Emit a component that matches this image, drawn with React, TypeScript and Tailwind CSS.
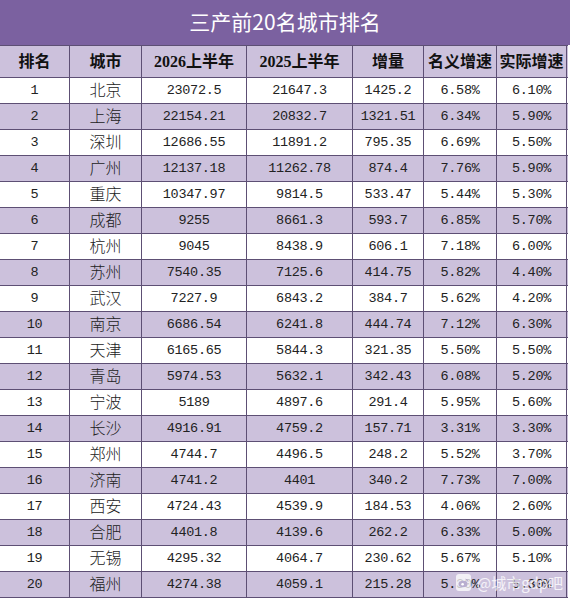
const rows = [
  ["1", "北京", "23072.5", "21647.3", "1425.2", "6.58%", "6.10%"],
  ["2", "上海", "22154.21", "20832.7", "1321.51", "6.34%", "5.90%"],
  ["3", "深圳", "12686.55", "11891.2", "795.35", "6.69%", "5.50%"],
  ["4", "广州", "12137.18", "11262.78", "874.4", "7.76%", "5.90%"],
  ["5", "重庆", "10347.97", "9814.5", "533.47", "5.44%", "5.30%"],
  ["6", "成都", "9255", "8661.3", "593.7", "6.85%", "5.70%"],
  ["7", "杭州", "9045", "8438.9", "606.1", "7.18%", "6.00%"],
  ["8", "苏州", "7540.35", "7125.6", "414.75", "5.82%", "4.40%"],
  ["9", "武汉", "7227.9", "6843.2", "384.7", "5.62%", "4.20%"],
  ["10", "南京", "6686.54", "6241.8", "444.74", "7.12%", "6.30%"],
  ["11", "天津", "6165.65", "5844.3", "321.35", "5.50%", "5.50%"],
  ["12", "青岛", "5974.53", "5632.1", "342.43", "6.08%", "5.20%"],
  ["13", "宁波", "5189", "4897.6", "291.4", "5.95%", "5.60%"],
  ["14", "长沙", "4916.91", "4759.2", "157.71", "3.31%", "3.30%"],
  ["15", "郑州", "4744.7", "4496.5", "248.2", "5.52%", "3.70%"],
  ["16", "济南", "4741.2", "4401", "340.2", "7.73%", "7.00%"],
  ["17", "西安", "4724.43", "4539.9", "184.53", "4.06%", "2.60%"],
  ["18", "合肥", "4401.8", "4139.6", "262.2", "6.33%", "5.00%"],
  ["19", "无锡", "4295.32", "4064.7", "230.62", "5.67%", "5.10%"],
  ["20", "福州", "4274.38", "4059.1", "215.28", "5.30%", "5.30%"],
];

const heads = ["排名", "城市", "2026上半年", "2025上半年", "增量", "名义增速", "实际增速"];
const widths = ["w-[70px]", "w-[72px]", "w-[105px]", "w-[106px]", "w-[71px]", "w-[73px]", "w-[70px]"];

const mono = { fontFamily: '"Liberation Mono", "Noto Sans CJK SC", monospace' };

export default function App() {
  return (
    <div className="relative h-[599px] w-[570px] overflow-hidden bg-white">
      <div className="flex h-[45px] items-center justify-center bg-[#7b61a0] pb-[2px] text-[21px] leading-none text-white [font-family:'Noto_Sans_CJK_SC',sans-serif]">
        三产前20名城市排名
      </div>
      <div className="w-[568px] border-t border-[#5d4f74]">
        <div className="flex h-[32px] border-b border-[#5d4f74] bg-[#ccc1dc]">
          {heads.map((h, i) => (
            <div
              key={h}
              className={`${widths[i]} flex items-center justify-center border-r border-[#5d4f74] text-[16px] leading-none font-bold text-[#111] [font-family:'Liberation_Serif','Noto_Sans_CJK_SC',serif]`}
            >
              {h}
            </div>
          ))}
        </div>
        {rows.map((r, ri) => (
          <div
            key={r[0]}
            className={`flex h-[26px] border-b border-[#5d4f74] ${ri % 2 === 0 ? "bg-white" : "bg-[#ccc1dc]"}`}
          >
            {r.map((c, ci) => (
              <div
                key={ci}
                className={`${widths[ci]} flex items-center justify-center border-r border-[#5d4f74] leading-none text-[#222]`}
              >
                {ci === 1 ? (
                  <span className="mb-[4px] text-[16px] leading-none font-light [font-family:'Noto_Sans_CJK_SC',sans-serif]">{c}</span>
                ) : (
                  <span className="text-[13.5px] leading-none tracking-[-0.3px]" style={mono}>
                    {c}
                  </span>
                )}
              </div>
            ))}
          </div>
        ))}
      </div>
      <div className="absolute left-[456px] top-[574px] flex items-center gap-[6px] text-[15px] leading-none text-white/80 [font-family:'Noto_Sans_CJK_SC',sans-serif]">
        <div className="flex h-[17px] w-[15px] items-center justify-center rounded-[3px] bg-white/75">
          <svg width="11" height="10" viewBox="0 0 11 10">
            <ellipse cx="5" cy="6" rx="4.5" ry="3.3" fill="#b9aed0" />
            <circle cx="4.6" cy="6.3" r="1.3" fill="#fff" />
            <path d="M7.5 1.2a2.6 2.6 0 0 1 2.6 2.6" stroke="#b9aed0" strokeWidth="1" fill="none" />
          </svg>
        </div>
        <span>@城市gdp吧</span>
      </div>
    </div>
  );
}
